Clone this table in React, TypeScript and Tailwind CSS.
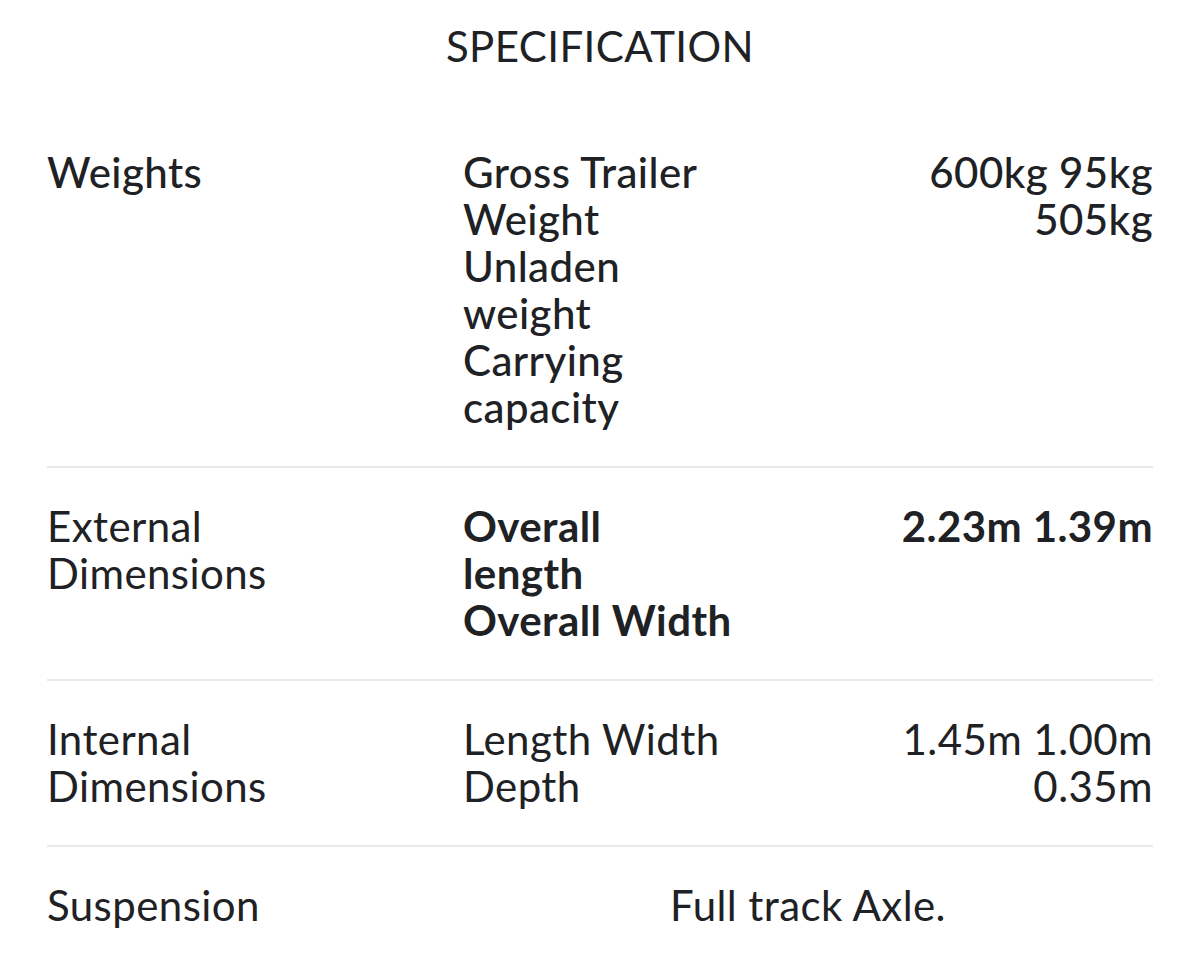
import React from 'react';

type SpecRow = {
  label: string;
  names?: string[];
  values?: string[];
  note?: string;
  weight: string;
};

const rows: SpecRow[] = [
  {
    label: 'Weights',
    names: ['Gross Trailer', 'Weight', 'Unladen', 'weight', 'Carrying', 'capacity'],
    values: ['600kg 95kg', '505kg'],
    weight: 'font-medium',
  },
  {
    label: 'External Dimensions',
    names: ['Overall', 'length', 'Overall Width'],
    values: ['2.23m 1.39m'],
    weight: 'font-bold',
  },
  {
    label: 'Internal Dimensions',
    names: ['Length Width', 'Depth'],
    values: ['1.45m 1.00m', '0.35m'],
    weight: 'font-normal',
  },
  { label: 'Suspension', note: 'Full track Axle.', weight: 'font-normal' },
];

const Lines = ({ items }: { items: string[] }) => (
  <>
    {items.map((line, i) => (
      <div key={`line-${i}`}>{line}</div>
    ))}
  </>
);

export default function App() {
  return (
    <div className="min-h-[957px] w-full bg-white px-[47px] text-[42px] leading-[47px] tracking-[0.01em] text-[#202124] [font-family:Lato,'Open_Sans',sans-serif]">
      <h2 className="pt-[23px] text-center font-normal">SPECIFICATION</h2>

      <div className="mt-[44px] flex flex-col">
        {rows.map((row, index) => (
          <div
            key={row.label}
            className={`grid grid-cols-[416px_1fr] py-[35px] ${index < rows.length - 1 ? 'border-b-2 border-[#e9e9e9]' : ''}`}
          >
            <div className={`pr-6 ${index === 0 ? 'font-medium' : 'font-normal'}`}>
              {row.label.split(' ').map((word) => (
                <div key={word}>{word}</div>
              ))}
            </div>

            {row.note ? (
              <div className="text-center">{row.note}</div>
            ) : (
              <div className={`flex justify-between ${row.weight}`}>
                <div>
                  <Lines items={row.names ?? []} />
                </div>
                <div className="text-right">
                  <Lines items={row.values ?? []} />
                </div>
              </div>
            )}
          </div>
        ))}
      </div>
    </div>
  );
}
